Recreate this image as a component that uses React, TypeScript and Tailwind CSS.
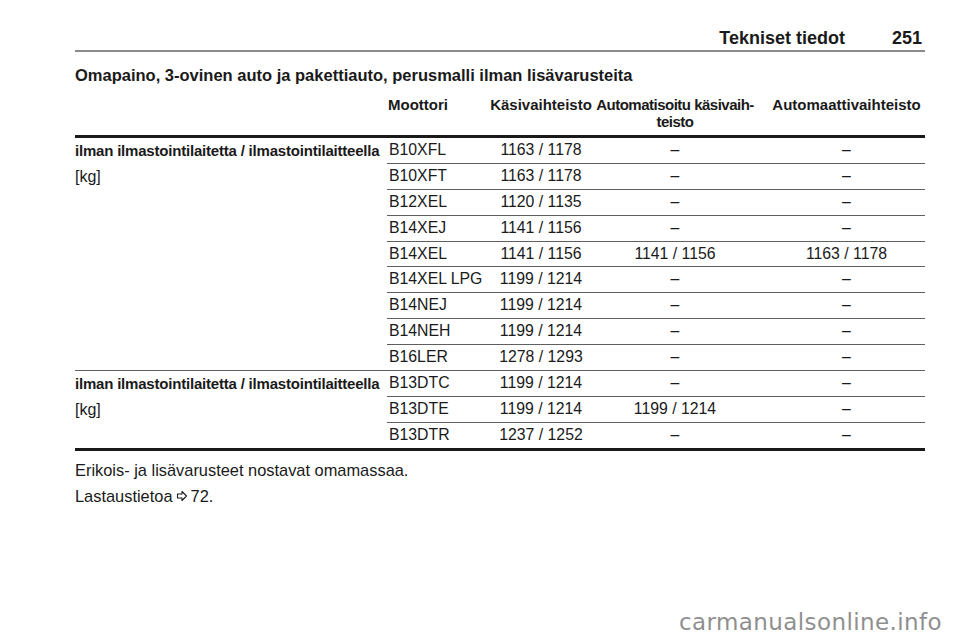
import React from "react";

const font = { fontFamily: '"Liberation Sans", Arial, sans-serif' };

type Row = [string, string, string, string];

const groups: Row[][] = [
  [
    ["B10XFL", "1163 / 1178", "–", "–"],
    ["B10XFT", "1163 / 1178", "–", "–"],
    ["B12XEL", "1120 / 1135", "–", "–"],
    ["B14XEJ", "1141 / 1156", "–", "–"],
    ["B14XEL", "1141 / 1156", "1141 / 1156", "1163 / 1178"],
    ["B14XEL LPG", "1199 / 1214", "–", "–"],
    ["B14NEJ", "1199 / 1214", "–", "–"],
    ["B14NEH", "1199 / 1214", "–", "–"],
    ["B16LER", "1278 / 1293", "–", "–"],
  ],
  [
    ["B13DTC", "1199 / 1214", "–", "–"],
    ["B13DTE", "1199 / 1214", "1199 / 1214", "–"],
    ["B13DTR", "1237 / 1252", "–", "–"],
  ],
];

const cols = "grid grid-cols-[103px_102px_176px_157px]";

const RefArrow = () => (
  <svg width="12" height="12" viewBox="0 0 12 12" className="inline-block mx-[3px] -mt-[3px]">
    <path d="M1.5 4 H6 V1.5 L10.5 6 L6 10.5 V8 H1.5 Z" fill="none" stroke="#1a1a1a" strokeWidth="1.1" strokeLinejoin="round" />
  </svg>
);

const Group = ({ rows, last }: { rows: Row[]; last: boolean }) => (
  <div className={`grid grid-cols-[312px_1fr] ${last ? "border-b-[3px] border-[#1a1a1a]" : "border-b border-[#5f5f5f]"}`}>
    <div className="leading-[25.9px]">
      <div className="font-bold text-[15px] tracking-[-0.2px] whitespace-nowrap">
        ilman ilmastointilaitetta / ilmastointilaitteella
      </div>
      <div className="text-[16px]">[kg]</div>
    </div>
    <div>
      {rows.map((r, i) => (
        <div
          key={r[0]}
          className={`${cols} text-[15.8px] ${i < rows.length - 1 ? "h-[25.9px] border-b border-[#5f5f5f] leading-[24.9px]" : "h-[24.9px] leading-[24.9px]"}`}
        >
          <div className="pl-[2px] whitespace-nowrap">{r[0]}</div>
          <div className="text-center">{r[1]}</div>
          <div className="text-center pr-[10px]">{r[2]}</div>
          <div className="text-center">{r[3]}</div>
        </div>
      ))}
    </div>
  </div>
);

export default function App() {
  return (
    <div className="relative w-[960px] h-[642px] bg-white text-[#1a1a1a] overflow-hidden" style={font}>
      <div className="ml-[75px] w-[850px] pt-[27px]">
        <div className="flex justify-end gap-[47px] border-b-2 border-[#8a8a8a] pb-[1px] pr-[3px] text-[18px] font-bold leading-[22px]">
          <span>Tekniset tiedot</span>
          <span>251</span>
        </div>

        <h2 className="mt-[13px] text-[16.5px] font-bold leading-[20px] whitespace-nowrap">
          Omapaino, 3-ovinen auto ja pakettiauto, perusmalli ilman lisävarusteita
        </h2>

        <div className="grid grid-cols-[312px_1fr] pt-[11px] pb-[5px] border-b-[3px] border-[#1a1a1a] text-[15px] font-bold leading-[17px]">
          <div />
          <div className={cols}>
            <div className="pl-[1px]">Moottori</div>
            <div className="text-center whitespace-nowrap">Käsivaihteisto</div>
            <div className="text-center pr-[10px] whitespace-nowrap tracking-[-0.5px]">
              Automatisoitu käsivaih-
              <br />
              teisto
            </div>
            <div className="text-center whitespace-nowrap">Automaattivaihteisto</div>
          </div>
        </div>

        {groups.map((g, i) => (
          <Group key={i} rows={g} last={i === groups.length - 1} />
        ))}

        <div className="mt-[6px] text-[16.4px] leading-[26px]">
          <p>Erikois- ja lisävarusteet nostavat omamassaa.</p>
          <p>
            Lastaustietoa
            <RefArrow />
            72.
          </p>
        </div>
      </div>

      <div
        className="absolute right-[18px] bottom-[3px] text-[23px] text-[#8f8f8f] tracking-[0.4px]"
        style={{ fontFamily: '"DejaVu Sans", Verdana, sans-serif' }}
      >
        carmanualsonline.info
      </div>
    </div>
  );
}
